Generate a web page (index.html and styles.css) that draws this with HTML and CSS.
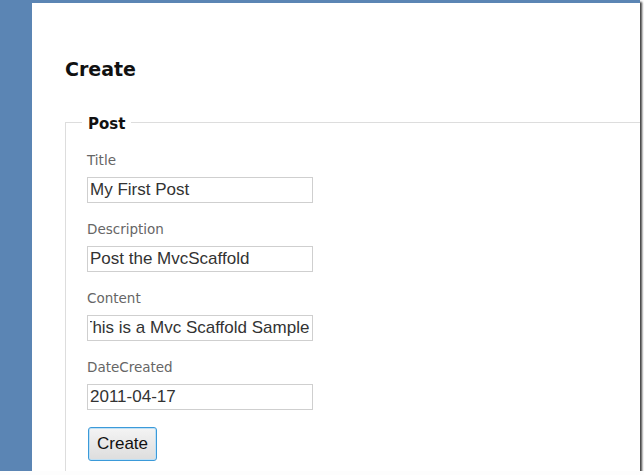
FILE: index.html
```html
<!DOCTYPE html>
<html lang="en">
<head>
  <meta charset="UTF-8" />
  <title>Create</title>
  <link rel="stylesheet" href="styles.css">
</head>
<body>
  <div class="frame">
    <div class="page">
      <h2>Create</h2>

      <form>
        <fieldset>
          <legend>Post</legend>

          <div class="field">
            <label for="title">Title</label>
            <input type="text" id="title" value="My First Post" />
          </div>

          <div class="field">
            <label for="description">Description</label>
            <input type="text" id="description" value="Post the MvcScaffold" />
          </div>

          <div class="field">
            <label for="content">Content</label>
            <input type="text" id="content" class="scrolled" value="This is a Mvc Scaffold Sample" />
          </div>

          <div class="field">
            <label for="dateCreated">DateCreated</label>
            <input type="text" id="dateCreated" value="2011-04-17" />
          </div>

          <button type="button">Create</button>
        </fieldset>
      </form>
    </div>
  </div>
</body>
</html>
```

FILE: styles.css
```css
body {
  margin: 0;
  background: #fdfdfd;
}

.frame {
  width: 640px;
  height: 471px;
  box-sizing: border-box;
  padding: 3px 0 0 32px;
  background: #5b85b4;
  box-shadow: 2px 2px 2px rgba(0, 0, 0, 0.75);
}

.page {
  height: 100%;
  background: #fff;
  overflow: hidden;
  padding-left: 33px;
}

h2 {
  margin: 0;
  padding-top: 54px;
  font-family: "DejaVu Sans", sans-serif;
  font-size: 19px;
  line-height: 24px;
  font-weight: bold;
  color: #111;
}

fieldset {
  margin: 29px 0 0 0;
  padding: 17px 0 0 21px;
  height: 400px;
  border: 1px solid #ddd;
  border-right: none;
  border-bottom: none;
}

legend {
  margin-left: -5px;
  padding: 4px 6px 0;
  font-family: "DejaVu Sans", sans-serif;
  font-size: 15px;
  line-height: 20px;
  font-weight: bold;
  color: #111;
}

.field label {
  display: block;
  margin-bottom: 8px;
  font-family: "DejaVu Sans", sans-serif;
  font-size: 13.5px;
  line-height: 18px;
  color: #666;
}

.field input {
  display: block;
  box-sizing: border-box;
  width: 226px;
  height: 26px;
  margin: 0 0 17px 0;
  padding: 0 2px;
  border: 1px solid #cfcfcf;
  font-family: "Liberation Sans", Arial, sans-serif;
  font-size: 17px;
  color: #333;
  background: #fff;
}

.field input.scrolled {
  text-indent: -8px;
}

button {
  display: block;
  margin-left: 1px;
  height: 34px;
  padding: 0 8px;
  border: 1px solid #3b9ad9;
  border-radius: 3px;
  background: linear-gradient(#f4f4f4, #dddddd);
  box-shadow: inset 0 0 0 1px #bfe0f5;
  font-family: "Liberation Sans", Arial, sans-serif;
  font-size: 17px;
  color: #111;
}
```
